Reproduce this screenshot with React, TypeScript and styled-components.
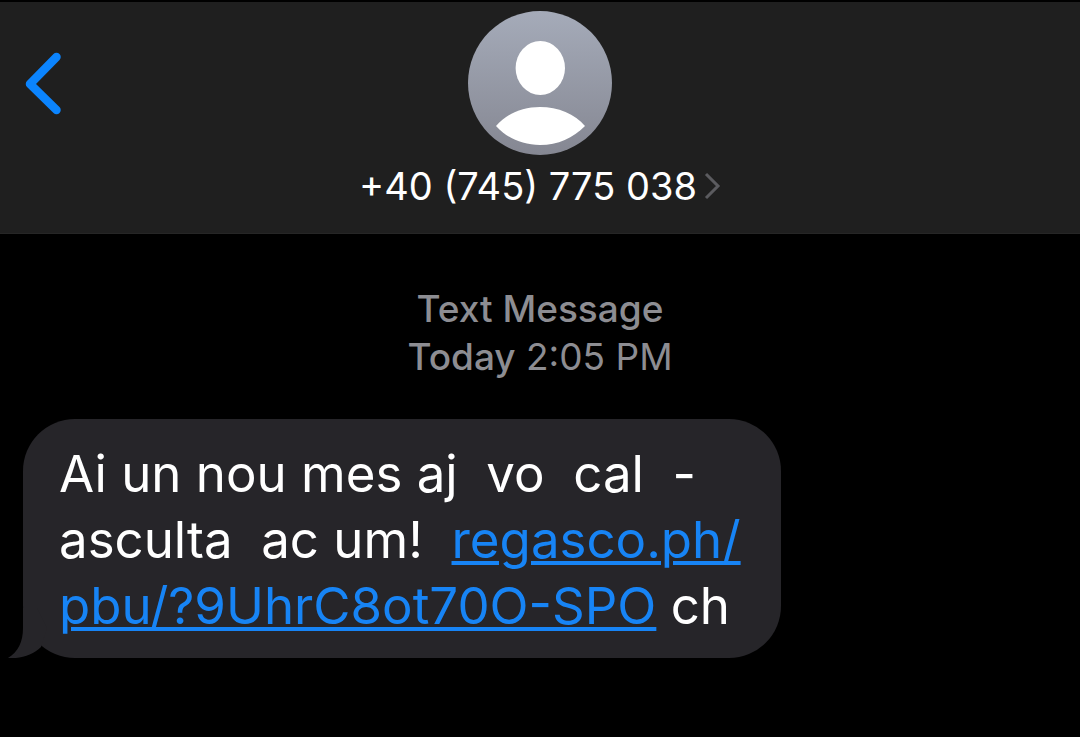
import React from "react";
import styled, { createGlobalStyle } from "styled-components";

const GlobalStyle = createGlobalStyle`
  * { box-sizing: border-box; }
  body {
    margin: 0;
    background: #000;
    color: #fff;
    font-family: Inter, "Liberation Sans", sans-serif;
  }
`;

const Header = styled.header`
  display: grid;
  grid-template-columns: 1fr auto 1fr;
  align-items: start;
  padding: 9px 24px 24px;
  background: #1f1f1f;
  border-top: 2px solid #000;
  border-bottom: 1px solid #262626;
`;

const BackButton = styled.button`
  justify-self: start;
  margin-top: 40px;
  padding: 0;
  border: 0;
  background: none;
  svg { display: block; }
`;

const ContactButton = styled.button`
  display: flex;
  flex-direction: column;
  align-items: center;
  gap: 8px;
  padding: 0;
  border: 0;
  background: none;
  color: #fff;
  font: inherit;
`;

const PhoneLine = styled.span`
  display: flex;
  align-items: center;
  gap: 6px;
  font-size: 38px;
  line-height: 46px;
`;

const Thread = styled.main`
  padding: 51px 23px 78px;
`;

const Stamp = styled.p`
  margin: 0 0 38px;
  text-align: center;
  color: #8d8d92;
  font-size: 37px;
  line-height: 48px;
  strong { font-weight: 500; }
`;

const Bubble = styled.div`
  position: relative;
  width: 100%;
  max-width: 758px;
  padding: 22px 20px 19px 36px;
  border-radius: 52px;
  background: #262529;
  font-size: 51px;
  line-height: 66px;
  white-space: pre-wrap;
`;

const Tail = styled.svg`
  position: absolute;
  left: -16px;
  bottom: 0;
`;

const Link = styled.a`
  color: #1784f5;
  text-decoration: underline;
  text-decoration-thickness: 4px;
  text-underline-offset: 3px;
`;

export default function App() {
  return (
    <>
      <GlobalStyle />
      <Header>
        <BackButton aria-label="Back">
          <svg width="38" height="64" viewBox="0 0 38 64" fill="none">
            <path
              d="M32.5 6 L6 33 L32.5 59"
              stroke="#0b84fe"
              strokeWidth="8.5"
              strokeLinecap="round"
              strokeLinejoin="round"
            />
          </svg>
        </BackButton>
        <ContactButton>
          <svg width="144" height="144" viewBox="0 0 144 144" aria-hidden="true">
            <defs>
              <linearGradient id="avatar" x1="0" y1="0" x2="0" y2="1">
                <stop offset="0" stopColor="#a5abb9" />
                <stop offset="1" stopColor="#858792" />
              </linearGradient>
            </defs>
            <circle cx="72" cy="72" r="72" fill="url(#avatar)" />
            <ellipse cx="72.3" cy="57" rx="24.7" ry="27" fill="#fff" />
            <path d="M28 115 C38 103 54 96 72 96 C90 96 107 103 117 115 C105 127 90 134 72 134 C54 134 39 127 28 115 Z" fill="#fff" />
          </svg>
          <PhoneLine>
            +40 (745) 775 038
            <svg width="18" height="28" viewBox="0 0 18 28" fill="none" aria-hidden="true">
              <path d="M3 2 L15 14 L3 26" stroke="#5b5b5f" strokeWidth="3" />
            </svg>
          </PhoneLine>
        </ContactButton>
      </Header>
      <Thread>
        <Stamp>
          <strong>Text Message</strong>
          <br />
          <strong>Today</strong> 2:05 PM
        </Stamp>
        <Bubble>
          <Tail width="60" height="50" viewBox="0 0 60 50" aria-hidden="true">
            <path d="M16 0 V20 C16 34 11 44 1 50 C14 51 26 47 34 39 L40 20 L30 0 Z" fill="#262529" />
          </Tail>
          {"Ai un nou mes aj  vo  cal  -\nasculta  ac um!  "}
          <Link href="#message-link">{"regasco.ph/\npbu/?9UhrC8ot70O-SPO"}</Link>
          {" ch"}
        </Bubble>
      </Thread>
    </>
  );
}
